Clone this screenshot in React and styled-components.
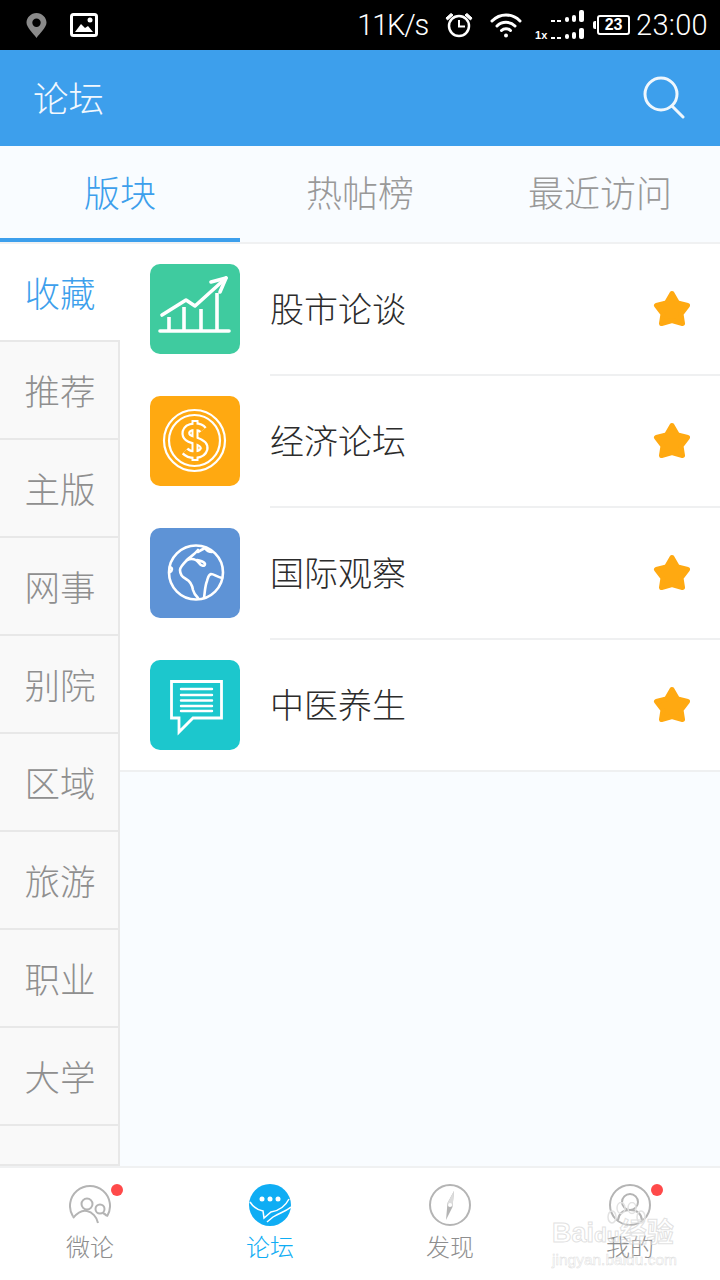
import React from 'react'
import styled, { createGlobalStyle } from 'styled-components'

const CJK = `"Noto Sans CJK SC", "Liberation Sans", sans-serif`

const GlobalStyle = createGlobalStyle`
    html, body {
        margin: 0;
        padding: 0;
        background: #fff;
    }
`

const SIDE_ITEMS = ['推荐', '主版', '网事', '别院', '区域', '旅游', '职业', '大学']

const StockIcon = () => (
    <svg width="90" height="90" viewBox="0 0 90 90" fill="none" stroke="#fff" strokeWidth="3.600" strokeLinecap="round" strokeLinejoin="round">
        <path d="M10 67H79" />
        <path d="M19 67V53M34 67V43M51 67V45M67 67V29" strokeLinecap="butt" />
        <path d="M12 51L36 36L45 42L76 14" />
        <path d="M61 18L76 14L70 28" />
    </svg>
)

const DOLLAR = 'M53 34C50 30 38 29 36 36C35 42 41 43 45 44.500C50 46 55 48 54 53C52 60 40 60 35 55'

const CoinIcon = () => (
    <svg width="90" height="90" viewBox="0 0 90 90" fill="none">
        <circle cx="44.500" cy="44.500" r="30.500" stroke="#fff" strokeWidth="2.200" />
        <circle cx="44.500" cy="44.500" r="25.500" stroke="#fff" strokeWidth="2.200" />
        <path d="M45 24V65" stroke="#fff" strokeWidth="7" />
        <path d={DOLLAR} stroke="#fff" strokeWidth="9" />
        <path d="M45 26V63" stroke="#ffa911" strokeWidth="3" />
        <path d={DOLLAR} stroke="#ffa911" strokeWidth="4.500" />
    </svg>
)

const GlobeIcon = () => (
    <svg width="90" height="90" viewBox="0 0 90 90" fill="none" stroke="#fff" strokeWidth="2.600" strokeLinecap="round" strokeLinejoin="round">
        <circle cx="46" cy="44.500" r="27" />
        <path d="M48 22C44 27 40 29 37 32C33 36 30 39 30 42C30 46 32 49 36 51C40 53 42 56 43 62C44 66 46 68 48 70" />
        <path d="M37 32C42 30 46 31 49 35C51 38 55 39 55 36C54 33 50 33 47 32" />
        <path d="M54 70C55 63 55 58 57 53C58 50 58 47 61 46C64 46 67 49 72 50" />
        <path d="M48 24C51 22 53 21 55 20C57 23 59 24 62 24" />
        <path d="M20 39C23 40 22 43 20 44" />
    </svg>
)

const ChatIcon = () => (
    <svg width="90" height="90" viewBox="0 0 90 90" fill="none" stroke="#fff">
        <path d="M21.500 21.500H71.500V58H43L29 72V58H21.500Z" strokeWidth="2.800" />
        <path d="M31 29H62M31 35H62M31 40.500H62M31 46H62M31 51H62" strokeWidth="2.400" strokeLinecap="round" />
    </svg>
)

const StarIcon = () => (
    <svg width="40" height="40" viewBox="0 0 40 40">
        <path d="M20 4.500L25.500 14L35.500 16.500L29 25L30.500 34.500L20 31.500L9.500 34.500L11 25L4.500 16.500L14.500 14Z" fill="#ffa911" stroke="#ffa911" strokeWidth="5" strokeLinejoin="round" />
    </svg>
)

const SearchIcon = () => (
    <svg width="44" height="44" viewBox="0 0 44 44" fill="none" stroke="#fff" strokeWidth="3" strokeLinecap="round" opacity="0.92">
        <circle cx="19" cy="19" r="16" />
        <path d="M30 31L41 42" />
    </svg>
)

const PinIcon = () => (
    <svg width="21" height="25" viewBox="0 0 21 25">
        <path fillRule="evenodd" d="M10.500 0C16 0 20.500 4.500 20.500 9.500C20.500 14.500 14 20 10.500 25C7 20 0.500 14.500 0.500 9.500C0.500 4.500 5 0 10.500 0ZM10.500 5.500A4.200 4.200 0 1 0 10.500 13.900A4.200 4.200 0 1 0 10.500 5.500Z" fill="#8a8a8a" />
    </svg>
)

const PictureIcon = () => (
    <svg width="28" height="24" viewBox="0 0 28 24">
        <rect x="1.500" y="1.500" width="25" height="21" rx="2" fill="#000" stroke="#fff" strokeWidth="3" />
        <path d="M5 19L11 11L15 15L18 13L23 19Z" fill="#fff" />
        <circle cx="20" cy="7" r="2.500" fill="#fff" />
    </svg>
)

const AlarmIcon = () => (
    <svg width="30" height="28" viewBox="0 0 30 28" fill="none" stroke="#fff">
        <circle cx="15" cy="15" r="10" strokeWidth="2.500" />
        <path d="M15 9V15.500H21" strokeWidth="2" />
        <path d="M2 7L7 2.500L9 4L3.500 9ZM28 7L23 2.500L21 4L26.500 9Z" fill="#fff" strokeWidth="1" />
    </svg>
)

const WifiIcon = () => (
    <svg width="32" height="26" viewBox="0 0 32 26" fill="none" stroke="#fff" strokeWidth="3" strokeLinecap="round">
        <path d="M2 9C10 1 22 1 30 9" />
        <path d="M7 14C12 9 20 9 25 14" />
        <path d="M11.500 18.500C14 16 18 16 20.500 18.500" />
        <circle cx="16" cy="23.500" r="2" fill="#fff" stroke="none" />
    </svg>
)

const SignalBars = () => (
    <svg width="50" height="30" viewBox="0 0 50 30" fill="#fff">
        <rect x="16" y="10" width="4" height="2" />
        <rect x="22" y="10" width="4" height="2" />
        <rect x="30" y="7" width="4" height="5" rx="2" />
        <rect x="37" y="5" width="4" height="7" rx="2" />
        <rect x="44" y="0" width="5" height="12" rx="2" />
        <rect x="16" y="27" width="4" height="2" />
        <rect x="22" y="27" width="4" height="2" />
        <rect x="30" y="24" width="4" height="5" rx="2" />
        <rect x="37" y="22" width="4" height="7" rx="2" />
        <rect x="44" y="18" width="5" height="11" rx="2" />
    </svg>
)

const FriendsIcon = () => (
    <svg width="42" height="42" viewBox="0 0 42 42" fill="none" stroke="#b4b4b4" strokeWidth="2">
        <path d="M4 32.500A20 20 0 1 1 38 32.500" />
        <circle cx="18" cy="20" r="5.500" />
        <circle cx="31" cy="25" r="4.500" />
        <path d="M4 34C9 28 14 26 18 27C23 28 28 33 29 39" />
        <path d="M34 29C36 30 37 31 38 32" />
    </svg>
)

const ForumIcon = () => (
    <svg width="42" height="42" viewBox="0 0 42 42">
        <circle cx="21" cy="21" r="21" fill="#0fadf4" />
        <circle cx="13" cy="15" r="2.500" fill="#fff" />
        <circle cx="21" cy="15" r="2.500" fill="#fff" />
        <circle cx="29" cy="15" r="2.500" fill="#fff" />
        <path d="M1 18C4 23 9 26 14 27L15 34L22 28C28 27 35 25 40 15" fill="none" stroke="#fff" strokeWidth="1.500" />
        <path d="M18 38L24 33C30 29 36 28 42 23" fill="none" stroke="#fff" strokeWidth="1.500" />
    </svg>
)

const CompassIcon = () => (
    <svg width="42" height="42" viewBox="0 0 42 42" fill="none">
        <circle cx="21" cy="21" r="20" stroke="#b4b4b4" strokeWidth="2" />
        <path d="M25 7L23.500 23L17 36L18.500 19Z" fill="#b4b4b4" />
        <path d="M25 7L23.500 23L18.500 19Z" fill="#dcdcdc" />
        <circle cx="21" cy="21" r="2" fill="#fff" />
    </svg>
)

const ProfileIcon = () => (
    <svg width="42" height="42" viewBox="0 0 42 42" fill="none" stroke="#b4b4b4" strokeWidth="2">
        <circle cx="21" cy="21" r="20" />
        <circle cx="21" cy="18" r="8" />
        <path d="M9 36C10 29 15 26 21 26C27 26 32 29 33 36" />
    </svg>
)

const PawMark = () => (
    <svg width="40" height="28" viewBox="0 0 40 28" fill="none" stroke="#e2e2e2" strokeWidth="1.500">
        <ellipse cx="6" cy="15" rx="4" ry="6" />
        <ellipse cx="15" cy="6" rx="4" ry="5.500" />
        <ellipse cx="26" cy="6" rx="4" ry="5.500" />
        <ellipse cx="35" cy="15" rx="4" ry="6" />
    </svg>
)

const FORUMS = [
    { name: '股市论谈', color: '#3fcb9f', Icon: StockIcon },
    { name: '经济论坛', color: '#ffa911', Icon: CoinIcon },
    { name: '国际观察', color: '#5e93d6', Icon: GlobeIcon },
    { name: '中医养生', color: '#1cc7cd', Icon: ChatIcon },
]

const NAV = [
    { label: '微论', Icon: FriendsIcon, dot: true },
    { label: '论坛', Icon: ForumIcon, active: true },
    { label: '发现', Icon: CompassIcon },
    { label: '我的', Icon: ProfileIcon, dot: true },
]

const App = () => {
    return (
        <Screen>
            <GlobalStyle />
            <StatusBar>
                <PinIcon />
                <PictureIcon />
                <StatusRight>
                    <Speed>11K/s</Speed>
                    <AlarmSlot><AlarmIcon /></AlarmSlot>
                    <WifiIcon />
                    <SignalWrap>
                        <SignalBars />
                        <SimLabel>1x</SimLabel>
                    </SignalWrap>
                    <Battery>23</Battery>
                    <Clock>23:00</Clock>
                </StatusRight>
            </StatusBar>
            <Header>
                <h1>论坛</h1>
                <SearchIcon />
            </Header>
            <Tabs>
                <Tab $active>版块</Tab>
                <Tab>热帖榜</Tab>
                <Tab>最近访问</Tab>
            </Tabs>
            <Main>
                <Sidebar>
                    <SideItem $active>收藏</SideItem>
                    {SIDE_ITEMS.map((item) => (
                        <SideItem key={item}>{item}</SideItem>
                    ))}
                    <SideFiller />
                </Sidebar>
                <List>
                    {FORUMS.map(({ name, color, Icon }, i) => (
                        <Row key={name} $last={i === FORUMS.length - 1}>
                            <Tile $color={color}><Icon /></Tile>
                            <RowBody $last={i === FORUMS.length - 1}>
                                <span>{name}</span>
                                <StarIcon />
                            </RowBody>
                        </Row>
                    ))}
                </List>
            </Main>
            <BottomNav>
                {NAV.map(({ label, Icon, dot, active }) => (
                    <NavItem key={label} $active={active}>
                        <NavIconWrap>
                            <Icon />
                            {dot && <Dot />}
                        </NavIconWrap>
                        <span>{label}</span>
                    </NavItem>
                ))}
                <Watermark>
                    <PawSpot><PawMark /></PawSpot>
                    <b>Bai<i>du</i>经验</b>
                    <small>jingyan.baidu.com</small>
                </Watermark>
            </BottomNav>
        </Screen>
    )
}

const Screen = styled.div`
    width: 720px;
    height: 1280px;
    display: flex;
    flex-direction: column;
    overflow: hidden;
    font-family: ${CJK};
    background: #f9fcff;
`

const StatusBar = styled.div`
    height: 50px;
    flex: none;
    display: flex;
    align-items: center;
    gap: 23px;
    padding: 0 12px 0 26px;
    background: #000;
`

const StatusRight = styled.div`
    margin-left: auto;
    display: flex;
    align-items: center;
    color: #fff;
`

const Speed = styled.span`
    font-family: Roboto, "Liberation Sans", sans-serif;
    font-weight: 300;
    font-size: 29px;
    letter-spacing: -1.200px;
    line-height: 50px;
    margin-right: 16px;
`

const AlarmSlot = styled.span`
    display: flex;
    margin-right: 16px;
`

const Clock = styled.span`
    font-family: Roboto, "Liberation Sans", sans-serif;
    font-weight: 300;
    font-size: 29px;
    letter-spacing: 0.300px;
    line-height: 50px;
    margin-left: 6px;
`

const SignalWrap = styled.div`
    position: relative;
    width: 50px;
    height: 30px;
    margin-left: 13px;
`

const SimLabel = styled.span`
    position: absolute;
    left: 0;
    bottom: -1px;
    font: bold 11px "Liberation Sans", sans-serif;
    color: #fff;
`

const Battery = styled.span`
    width: 33px;
    height: 20px;
    box-sizing: border-box;
    border: 2px solid #fff;
    border-radius: 3px;
    margin-left: 12px;
    display: flex;
    align-items: center;
    justify-content: center;
    position: relative;
    font: bold 16px "Liberation Sans", sans-serif;
    color: #fff;

    &::before {
        content: '';
        position: absolute;
        left: -6px;
        top: 4px;
        width: 3px;
        height: 8px;
        background: #fff;
        border-radius: 2px 0 0 2px;
    }
`

const Header = styled.header`
    height: 96px;
    flex: none;
    display: flex;
    align-items: center;
    justify-content: space-between;
    padding: 0 34px 2px 33px;
    box-sizing: border-box;
    background: #3d9fec;

    h1 {
        margin: 0 0 2px;
        font-size: 35.500px;
        font-weight: 300;
        color: #f2f8fe;
    }
`

const Tabs = styled.div`
    height: 98px;
    flex: none;
    display: flex;
    box-sizing: border-box;
    border-bottom: 2px solid #f0f1f2;
    background: #f9fcff;
`

const Tab = styled.div`
    width: 240px;
    height: 96px;
    box-sizing: border-box;
    display: flex;
    align-items: center;
    justify-content: center;
    padding-bottom: 2px;
    font-size: 36px;
    font-weight: 300;
    color: ${(p) => (p.$active ? '#3d9fec' : '#999')};
    border-bottom: 4px solid ${(p) => (p.$active ? '#3d9fec' : 'transparent')};
`

const Main = styled.div`
    flex: 1;
    min-height: 0;
    display: flex;
`

const Sidebar = styled.aside`
    width: 120px;
    flex: none;
    display: flex;
    flex-direction: column;
`

const SideItem = styled.div`
    height: ${(p) => (p.$active ? '96px' : '98px')};
    flex: none;
    box-sizing: border-box;
    display: flex;
    align-items: center;
    justify-content: center;
    padding-bottom: 2px;
    padding-left: ${(p) => (p.$active ? '0' : '2px')};
    font-size: 35.500px;
    font-weight: 300;
    color: ${(p) => (p.$active ? '#3d9fec' : '#8f8f8f')};
    background: ${(p) => (p.$active ? '#fff' : '#f9f9f9')};
    border-right: ${(p) => (p.$active ? 'none' : '2px solid #e8e8e8')};
    border-top: ${(p) => (p.$active ? 'none' : '2px solid #e8e8e8')};
`

const SideFiller = styled.div`
    flex: 1;
    box-sizing: border-box;
    background: #f9f9f9;
    border-top: 2px solid #e8e8e8;
    border-right: 2px solid #e8e8e8;
    border-bottom: 2px solid #e8e8e8;
`

const List = styled.div`
    flex: 1;
    min-width: 0;
    display: flex;
    flex-direction: column;
`

const Row = styled.div`
    height: 132px;
    flex: none;
    box-sizing: border-box;
    display: flex;
    gap: 30px;
    padding-left: 30px;
    background: #fff;
    border-bottom: ${(p) => (p.$last ? '2px solid #eff0f1' : 'none')};
`

const Tile = styled.div`
    width: 90px;
    height: 90px;
    flex: none;
    margin-top: 20px;
    border-radius: 10px;
    background: ${(p) => p.$color};

    svg {
        display: block;
    }
`

const RowBody = styled.div`
    flex: 1;
    box-sizing: border-box;
    display: flex;
    align-items: center;
    justify-content: space-between;
    padding-right: 28px;
    font-size: 34px;
    font-weight: 300;
    color: #2c2c2c;
    border-bottom: ${(p) => (p.$last ? 'none' : '2px solid #eff0f1')};

    span {
        margin-bottom: 3px;
    }
`

const BottomNav = styled.nav`
    height: 114px;
    flex: none;
    box-sizing: border-box;
    display: flex;
    position: relative;
    border-top: 2px solid #f0f1f2;
    background: #fff;
`

const NavItem = styled.div`
    width: 180px;
    display: flex;
    flex-direction: column;
    align-items: center;
    padding-top: 16px;
    font-size: 24px;
    font-weight: 300;
    line-height: 36px;
    color: ${(p) => (p.$active ? '#0fadf4' : '#8e8e8e')};
`

const NavIconWrap = styled.div`
    position: relative;
    width: 42px;
    height: 42px;
    margin-bottom: 2px;

    svg {
        display: block;
    }
`

const Dot = styled.span`
    position: absolute;
    right: -12px;
    top: 0;
    width: 12px;
    height: 12px;
    border-radius: 50%;
    background: #ff4a4a;
`

const Watermark = styled.div`
    position: absolute;
    left: 552px;
    top: 52px;
    width: 130px;
    color: rgba(255, 255, 255, 0.35);
    -webkit-text-stroke: 1px rgba(205, 205, 205, 0.6);
    font-family: "Liberation Sans", ${CJK};
    line-height: 1;

    b {
        display: block;
        font-size: 27px;
        font-weight: 700;
        white-space: nowrap;
    }

    i {
        font-style: normal;
        font-size: 21px;
    }

    small {
        display: block;
        margin-top: 5px;
        font-size: 15.500px;
        white-space: nowrap;
        -webkit-text-stroke: 0.500px rgba(205, 205, 205, 0.7);
    }
`

const PawSpot = styled.div`
    position: absolute;
    left: 54px;
    top: -18px;
`

export default App
